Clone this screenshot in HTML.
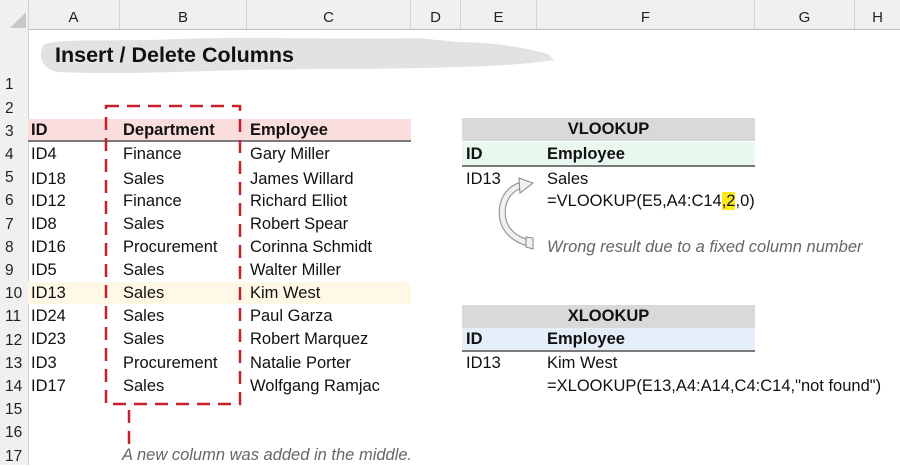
<!DOCTYPE html>
<html><head><style>
body{margin:0;width:900px;height:465px;overflow:hidden;background:#fff;font-family:"Liberation Sans",sans-serif;position:relative;color:#111}
.a{position:absolute}
.t{position:absolute;font-size:16.5px;line-height:23px;height:23px;white-space:nowrap}
.b{font-weight:bold}
.ch{position:absolute;top:0;height:29px;line-height:36px;font-size:15px;text-align:center;border-right:1px solid #d4d4d4;color:#222}
.rh{position:absolute;left:0;width:27px;font-size:15.5px;text-align:left;padding-left:5px;box-sizing:border-box;color:#222;line-height:23px}
</style></head><body>
<div class="a" style="left:0;top:0;width:900px;height:29px;background:#f0f0f0;border-bottom:1px solid #bdbdbd"></div>
<div class="a" style="left:0;top:0;width:28px;height:465px;background:#f0f0f0;border-right:1px solid #cfcfcf"></div>
<svg class="a" style="left:8px;top:12px" width="18" height="16"><polygon points="18,0 18,16 2,16" fill="#c8c8c8"/></svg>
<div class="ch" style="left:28px;width:91px">A</div>
<div class="ch" style="left:120px;width:126px">B</div>
<div class="ch" style="left:247px;width:163px">C</div>
<div class="ch" style="left:411px;width:49px">D</div>
<div class="ch" style="left:461px;width:75px">E</div>
<div class="ch" style="left:537px;width:217px">F</div>
<div class="ch" style="left:755px;width:99px">G</div>
<div class="ch" style="left:855px;width:45px;border:none">H</div>
<div class="rh" style="top:73px">1</div>
<div class="rh" style="top:96.5px">2</div>
<div class="rh" style="top:119.7px">3</div>
<div class="rh" style="top:142.9px">4</div>
<div class="rh" style="top:166.1px">5</div>
<div class="rh" style="top:189.3px">6</div>
<div class="rh" style="top:212.5px">7</div>
<div class="rh" style="top:235.7px">8</div>
<div class="rh" style="top:258.9px">9</div>
<div class="rh" style="top:282.1px">10</div>
<div class="rh" style="top:305.3px">11</div>
<div class="rh" style="top:328.5px">12</div>
<div class="rh" style="top:351.7px">13</div>
<div class="rh" style="top:374.9px">14</div>
<div class="rh" style="top:398.1px">15</div>
<div class="rh" style="top:421.3px">16</div>
<div class="rh" style="top:444.5px">17</div>

<svg class="a" style="left:38px;top:30px" width="520" height="48"><path d="M6,14 C30,8 80,12 140,9 C220,6 300,10 380,8 L420,12 C450,12 480,16 510,24 L516,30 C490,34 460,36 420,37 C340,40 250,38 170,41 C110,43 60,44 20,42 C8,40 2,32 3,22 Z" fill="#e2e2e2"/></svg>
<div class="t b" style="left:55px;top:44px;font-size:21.5px">Insert / Delete Columns</div>

<div class="a" style="left:28px;top:119px;width:383px;height:21px;background:#fadedd;border-bottom:2px solid #7a7a7a"></div>
<div class="a" style="left:28px;top:282px;width:383px;height:22px;background:#fff8e6"></div>

<div class="t b" style="left:31px;top:119px">ID</div>
<div class="t b" style="left:123px;top:119px">Department</div>
<div class="t b" style="left:250px;top:119px">Employee</div>

<div class="t" style="left:31px;top:143px">ID4</div><div class="t" style="left:123px;top:143px">Finance</div><div class="t" style="left:250px;top:143px">Gary Miller</div>
<div class="t" style="left:31px;top:168px">ID18</div><div class="t" style="left:123px;top:168px">Sales</div><div class="t" style="left:250px;top:168px">James Willard</div>
<div class="t" style="left:31px;top:190px">ID12</div><div class="t" style="left:123px;top:190px">Finance</div><div class="t" style="left:250px;top:190px">Richard Elliot</div>
<div class="t" style="left:31px;top:213px">ID8</div><div class="t" style="left:123px;top:213px">Sales</div><div class="t" style="left:250px;top:213px">Robert Spear</div>
<div class="t" style="left:31px;top:236px">ID16</div><div class="t" style="left:123px;top:236px">Procurement</div><div class="t" style="left:250px;top:236px">Corinna Schmidt</div>
<div class="t" style="left:31px;top:259px">ID5</div><div class="t" style="left:123px;top:259px">Sales</div><div class="t" style="left:250px;top:259px">Walter Miller</div>
<div class="t" style="left:31px;top:282px">ID13</div><div class="t" style="left:123px;top:282px">Sales</div><div class="t" style="left:250px;top:282px">Kim West</div>
<div class="t" style="left:31px;top:305px">ID24</div><div class="t" style="left:123px;top:305px">Sales</div><div class="t" style="left:250px;top:305px">Paul Garza</div>
<div class="t" style="left:31px;top:328px">ID23</div><div class="t" style="left:123px;top:328px">Sales</div><div class="t" style="left:250px;top:328px">Robert Marquez</div>
<div class="t" style="left:31px;top:352px">ID3</div><div class="t" style="left:123px;top:352px">Procurement</div><div class="t" style="left:250px;top:352px">Natalie Porter</div>
<div class="t" style="left:31px;top:375px">ID17</div><div class="t" style="left:123px;top:375px">Sales</div><div class="t" style="left:250px;top:375px">Wolfgang Ramjac</div>

<svg class="a" style="left:0;top:0" width="900" height="465"><g fill="none" stroke="#c8202a" stroke-width="2.5" stroke-dasharray="13,8"><path d="M106,106 H240 V404 H106 Z"/><path d="M129,410 V444"/></g>
<path d="M528,243 C505,236 500,220 503,205 C506,193 514,187 522,185" fill="none" stroke="#888" stroke-width="7"/>
<path d="M528,243 C505,236 500,220 503,205 C506,193 514,187 522,185" fill="none" stroke="#eef1ee" stroke-width="5"/>
<polygon points="519,178 533,183 520,193" fill="#eef1ee" stroke="#888" stroke-width="1"/>
<polygon points="526,237 533,238 533,249 526,247" fill="#eef1ee" stroke="#888" stroke-width="1"/></svg>

<div class="t" style="left:122px;top:444px;color:#666;font-style:italic">A new column was added in the middle.</div>

<div class="a" style="left:462px;top:118px;width:293px;height:23px;background:#d9d9d9"></div>
<div class="t b" style="left:462px;top:118px;width:293px;text-align:center">VLOOKUP</div>
<div class="a" style="left:462px;top:142px;width:293px;height:23px;background:#e8f8ef;border-bottom:2px solid #7a7a7a"></div>
<div class="t b" style="left:466px;top:143px">ID</div><div class="t b" style="left:547px;top:143px">Employee</div>
<div class="t" style="left:466px;top:168px">ID13</div><div class="t" style="left:547px;top:168px">Sales</div>
<div class="t" style="left:547px;top:190px">=VLOOKUP(E5,A4:C14<span style="background:#ffe81a">,2</span>,0)</div>
<div class="t" style="left:547px;top:236px;color:#666;font-style:italic">Wrong result due to a fixed column number</div>

<div class="a" style="left:462px;top:305px;width:293px;height:23px;background:#d9d9d9"></div>
<div class="t b" style="left:462px;top:305px;width:293px;text-align:center">XLOOKUP</div>
<div class="a" style="left:462px;top:328px;width:293px;height:22px;background:#e5eef8;border-bottom:2px solid #7a7a7a"></div>
<div class="t b" style="left:466px;top:328px">ID</div><div class="t b" style="left:547px;top:328px">Employee</div>
<div class="t" style="left:466px;top:352px">ID13</div><div class="t" style="left:547px;top:352px">Kim West</div>
<div class="t" style="left:547px;top:375px">=XLOOKUP(E13,A4:A14,C4:C14,"not found")</div>
</body></html>
